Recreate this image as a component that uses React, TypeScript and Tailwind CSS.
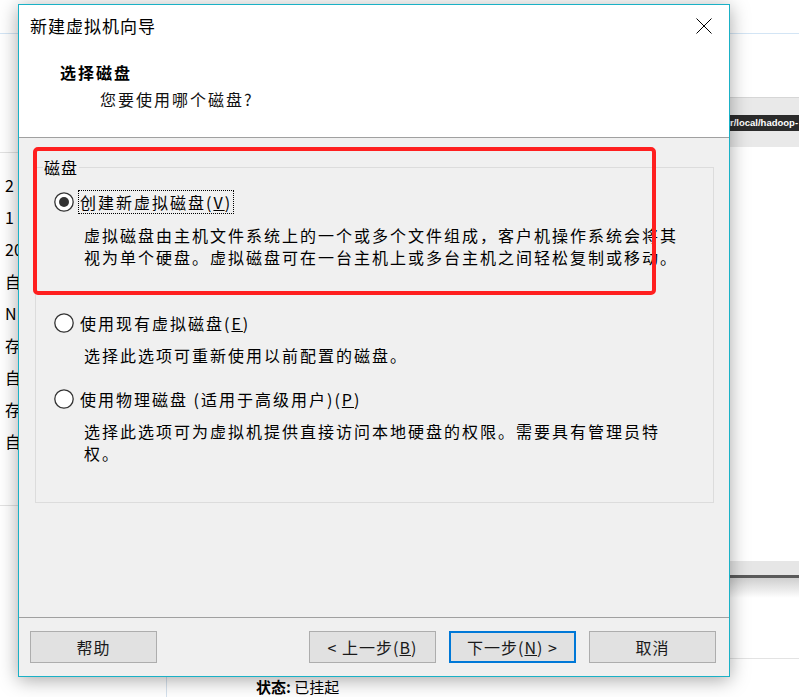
import React from "react";

function Radio({ checked }: { checked?: boolean }) {
  return (
    <svg width="20" height="20" viewBox="0 0 20 20" className="shrink-0">
      <circle cx="10" cy="10" r="9.2" fill="#ffffff" stroke="#333333" strokeWidth="1.3" />
      {checked && <circle cx="10" cy="10" r="5" fill="#333333" />}
    </svg>
  );
}

function Btn({ children, primary }: { children: React.ReactNode; primary?: boolean }) {
  return (
    <div
      className={
        "w-[127px] h-[32px] flex items-center justify-center bg-[#e1e1e1] text-[16px] tracking-[1px] text-[#1a1a1a] " +
        (primary ? "border-2 border-[#0078d7]" : "border border-[#adadad]")
      }
    >
      {children}
    </div>
  );
}

export default function App() {
  return (
    <div className="relative w-[799px] h-[697px] overflow-hidden bg-white text-black font-['Noto_Sans_CJK_SC','Noto_Sans',sans-serif]">
      {/* background application */}
      <div className="flex h-full">
        <div className="w-[18px] flex flex-col">
          <div className="h-[33px]" />
          <div className="h-px bg-[#d3e5f5]" />
          <div className="h-[118px]" />
          <div className="h-px bg-[#e2e2e2]" />
          <div className="pt-[16px] pl-[5px] flex flex-col text-[16px] leading-[32px] whitespace-nowrap">
            <span>2</span>
            <span>1</span>
            <span>20</span>
            <span>自</span>
            <span>N</span>
            <span>存</span>
            <span>自</span>
            <span>存</span>
            <span>自</span>
          </div>
          <div className="h-[48px]" />
          <div className="h-px bg-[#e2e2e2]" />
        </div>
        <div className="flex-1 flex flex-col">
          <div className="h-[33px]" />
          <div className="h-px bg-[#d3e5f5]" />
          <div className="flex-1" />
          <div className="h-[20px] flex">
            <div className="w-[148px]" />
            <div className="w-px bg-[#d6e2ee]" />
            <div className="pl-[89px] pt-[1px] text-[15px] leading-[18px] whitespace-nowrap">
              <span className="font-bold">状态:</span> 已挂起
            </div>
          </div>
        </div>
        <div className="w-[69px] flex flex-col overflow-hidden">
          <div className="h-[33px]" />
          <div className="h-px bg-[#d3e5f5]" />
          <div className="h-[63px]" />
          <div className="h-px bg-[#d6d6d6]" />
          <div className="h-[17px] bg-[#e9e9e9]" />
          <div className="h-[16px] bg-[#2b2b2b] text-white font-bold text-[9.5px] leading-[16px] whitespace-nowrap font-['Liberation_Sans',sans-serif]">
            r/local/hadoop-
          </div>
          <div className="h-[16px] bg-[#e9e9e9]" />
          <div className="h-[414px]" />
          <div className="h-[14px] bg-[#e6e6e6]" />
          <div className="h-[3px] bg-[#5a5a5a]" />
          <div className="h-[20px] bg-gradient-to-b from-[#cfcfcf] to-white" />
          <div className="h-[60px]" />
          <div className="h-px bg-[#e3e3e3]" />
        </div>
      </div>

      {/* dialog window */}
      <div className="absolute left-[18px] top-[4px] w-[712px] h-[673px] border border-[#1ab1c6] bg-[#f0f0f0] flex flex-col shadow-[0_3px_18px_rgba(0,0,0,0.35)]">
        <div className="h-[133px] bg-white border-b border-[#a0a0a0] flex flex-col">
          <div className="pt-[9px] pl-[11px] pr-[17px] flex items-center justify-between">
            <span className="text-[17px] leading-[24px] tracking-[1px]">新建虚拟机向导</span>
            <svg width="16" height="16" viewBox="0 0 16 16">
              <path d="M0.5 0.5 L15.5 15.5 M15.5 0.5 L0.5 15.5" stroke="#000" strokeWidth="1" />
            </svg>
          </div>
          <div className="mt-[23px] pl-[41px] text-[16px] leading-[22px] font-bold tracking-[2px]">选择磁盘</div>
          <div className="mt-[5px] pl-[81px] text-[16px] leading-[22px] tracking-[2px] text-[#111]">您要使用哪个磁盘?</div>
        </div>

        <div className="flex-1 flex flex-col">
          <fieldset className="mt-[18px] ml-[16px] mr-[15px] h-[347px] border border-[#dcdcdc]">
            <legend className="ml-[7px] px-[1px] text-[16px] leading-[22px] tracking-[1px]">磁盘</legend>
            <div className="pt-[12px] flex flex-col text-[16px] tracking-[2px] whitespace-nowrap">
              <div className="pl-[18px] h-[24px] flex items-center">
                <Radio checked />
                <span className="ml-[4px] px-[1px] border border-dotted border-black leading-[22px]">
                  创建新虚拟磁盘(<u>V</u>)
                </span>
              </div>
              <div className="mt-[10px] pl-[48px] leading-[22px]">
                虚拟磁盘由主机文件系统上的一个或多个文件组成，客户机操作系统会将其
                <br />
                视为单个硬盘。虚拟磁盘可在一台主机上或多台主机之间轻松复制或移动。
              </div>
              <div className="mt-[43px] pl-[18px] h-[24px] flex items-center">
                <Radio />
                <span className="ml-[4px] px-[1px] border border-transparent leading-[22px]">
                  使用现有虚拟磁盘(<u>E</u>)
                </span>
              </div>
              <div className="mt-[9px] pl-[48px] leading-[22px]">选择此选项可重新使用以前配置的磁盘。</div>
              <div className="mt-[21px] pl-[18px] h-[24px] flex items-center">
                <Radio />
                <span className="ml-[4px] px-[1px] border border-transparent leading-[22px]">
                  使用物理磁盘 (适用于高级用户)(<u>P</u>)
                </span>
              </div>
              <div className="mt-[9px] pl-[48px] leading-[22px]">
                选择此选项可为虚拟机提供直接访问本地硬盘的权限。需要具有管理员特
                <br />
                权。
              </div>
            </div>
          </fieldset>
        </div>

        <div className="h-[59px] border-t border-[#a0a0a0] pt-[13px] pl-[11px] pr-[13px] flex items-start">
          <Btn>帮助</Btn>
          <div className="flex-1" />
          <div className="flex gap-[13px]">
            <Btn>&lt; 上一步(<u>B</u>)</Btn>
            <Btn primary>下一步(<u>N</u>) &gt;</Btn>
            <Btn>取消</Btn>
          </div>
        </div>
      </div>

      {/* red annotation box */}
      <div className="absolute left-[33px] top-[147px] w-[623px] h-[148px] border-[4px] border-[#ff1f1f] rounded-[5px]" />
    </div>
  );
}
